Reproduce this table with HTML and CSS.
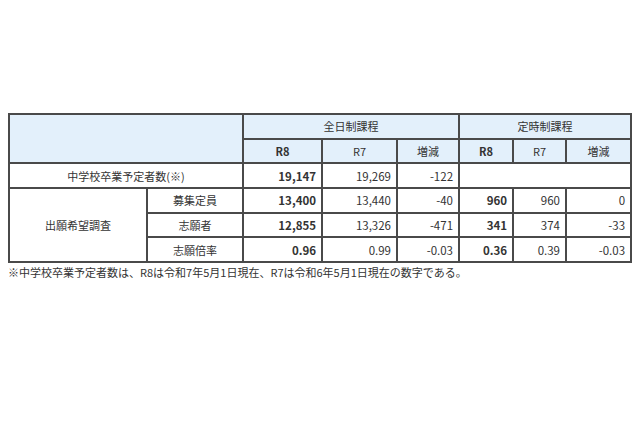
FILE: index.html
```html
<!DOCTYPE html>
<html lang="ja">
<head>
<meta charset="utf-8">
<link rel="stylesheet" href="styles.css">
</head>
<body>
<div class="wrap">
<table class="data">
<colgroup>
<col style="width:138px"><col style="width:96px"><col style="width:79px"><col style="width:75px"><col style="width:62px"><col style="width:54px"><col style="width:53px"><col style="width:65px">
</colgroup>
<tr class="hd">
<td colspan="2" rowspan="2"></td>
<td colspan="3">全日制課程</td>
<td colspan="3">定時制課程</td>
</tr>
<tr class="hd">
<td class="b">R8</td><td>R7</td><td>増減</td>
<td class="b">R8</td><td>R7</td><td>増減</td>
</tr>
<tr>
<td colspan="2">中学校卒業予定者数(※)</td>
<td class="n b">19,147</td><td class="n">19,269</td><td class="n">-122</td>
<td colspan="3"></td>
</tr>
<tr>
<td rowspan="3">出願希望調査</td>
<td>募集定員</td>
<td class="n b">13,400</td><td class="n">13,440</td><td class="n">-40</td>
<td class="n b">960</td><td class="n">960</td><td class="n">0</td>
</tr>
<tr>
<td>志願者</td>
<td class="n b">12,855</td><td class="n">13,326</td><td class="n">-471</td>
<td class="n b">341</td><td class="n">374</td><td class="n">-33</td>
</tr>
<tr>
<td>志願倍率</td>
<td class="n b">0.96</td><td class="n">0.99</td><td class="n">-0.03</td>
<td class="n b">0.36</td><td class="n">0.39</td><td class="n">-0.03</td>
</tr>
</table>
<p class="note">※中学校卒業予定者数は、R8は令和7年5月1日現在、R7は令和6年5月1日現在の数字である。</p>
</div>
</body>
</html>
```
FILE: styles.css
```css
html, body {
  margin: 0;
  background: #fff;
}
body {
  padding: 113px 0 0 8px;
  font-family: "Noto Sans CJK JP", "Noto Sans", sans-serif;
  color: #333;
}
.data {
  border-collapse: collapse;
  table-layout: fixed;
  width: 622px;
  font-size: 11px;
}
.data tr {
  height: 24.7px;
}
.data td {
  border: 2px solid #4a4a4a;
  padding: 0 5px;
  text-align: center;
  line-height: 14px;
  white-space: nowrap;
}
.hd td {
  background: #e3f0fb;
}
.data td.n {
  text-align: right;
  font-size: 11.5px;
}
.b {
  font-weight: bold;
}
.note {
  margin: 0;
  font-size: 11px;
  line-height: 16px;
  padding-top: 1px;
  color: #333;
}
```
